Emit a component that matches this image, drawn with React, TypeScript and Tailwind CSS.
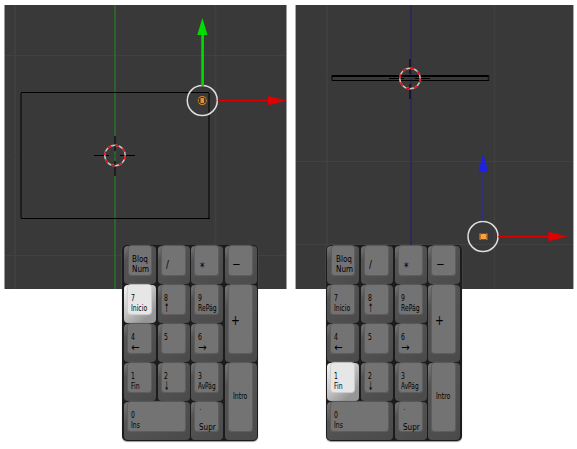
import React from "react";

type Line = { text: string; scale?: string; font?: string };
type KeyDef = {
  id: string;
  span?: string;
  pad: string;
  lines: Line[];
};

const narrow = "scale-x-[.65]";
const wide = "scale-x-[.77]";
const small = "text-[9.4px] leading-[10px]";
const sideArrow = "text-[11px] leading-[11px]";
const upArrow = "text-[12px] leading-[11px]";
const low = "pt-[8px] pl-[6.7px]";

const keys: KeyDef[] = [
  { id: "lock", pad: "pt-[8px] pl-[8.3px]", lines: [{ text: "Bloq", scale: wide }, { text: "Num", scale: wide }] },
  { id: "div", pad: "pt-[13px] pl-[8px]", lines: [{ text: "/", font: "text-[10px] leading-[12px]", scale: "scale-x-[.85]" }] },
  { id: "mul", pad: "pt-[15px] pl-[9px]", lines: [{ text: "*", font: "text-[12px] leading-[12px]", scale: "scale-x-[.75]" }] },
  { id: "sub", pad: "pt-[13.5px] pl-[7.5px]", lines: [{ text: "−", font: "text-[11px] leading-[12px]", scale: "scale-x-[.95]" }] },
  { id: "7", pad: low, lines: [{ text: "7" }, { text: "Inicio" }] },
  { id: "8", pad: low, lines: [{ text: "8" }, { text: "↑", font: upArrow, scale: "scale-x-[.5]" }] },
  { id: "9", pad: low, lines: [{ text: "9" }, { text: "RePág" }] },
  { id: "add", span: "row-span-2", pad: "pt-[28px] pl-[6.5px]", lines: [{ text: "+", font: "text-[14px] leading-[15px]", scale: "scale-x-[.75]" }] },
  { id: "4", pad: low, lines: [{ text: "4" }, { text: "←", font: sideArrow, scale: "scale-x-[.92]" }] },
  { id: "5", pad: low, lines: [{ text: "5" }] },
  { id: "6", pad: low, lines: [{ text: "6" }, { text: "→", font: sideArrow, scale: "scale-x-[.92]" }] },
  { id: "1", pad: low, lines: [{ text: "1" }, { text: "Fin" }] },
  { id: "2", pad: low, lines: [{ text: "2" }, { text: "↓", font: upArrow, scale: "scale-x-[.5]" }] },
  { id: "3", pad: low, lines: [{ text: "3" }, { text: "AvPág", scale: "scale-x-[.62]" }] },
  { id: "enter", span: "row-span-2", pad: "pt-[28px] pl-[8px]", lines: [{ text: "Intro", font: "text-[9.5px] leading-[10px]" }] },
  { id: "0", span: "col-span-2", pad: low, lines: [{ text: "0" }, { text: "Ins" }] },
  { id: "dot", pad: "pt-[2px] pl-[8px]", lines: [{ text: "˙", font: "text-[9px] leading-[18px]" }, { text: "Supr", scale: wide }] },
];

function Key({ def, lit }: { def: KeyDef; lit: boolean }) {
  const shell = lit
    ? "bg-[linear-gradient(135deg,#f4f4f4_0%,#cfcfcf_35%,#969696_80%)]"
    : "bg-[linear-gradient(135deg,#787878_0%,#545454_22%,#4a4a4a_100%)]";
  const face = lit ? "bg-[#e6e6e6] shadow-[0_0_1px_1px_#d0d0d0]" : "bg-[#737373] shadow-[0_0_1px_.5px_#606060]";
  return (
    <div className={`rounded-[4px] pt-[3px] pr-[5px] pb-[6px] ${def.id === "lock" ? "pl-[5px]" : "pl-[4px]"} ${def.span ?? ""} ${shell}`}>
      <div className={`h-full rounded-[3px] ${face}`}>
        <div className={`-mt-[3px] ${def.id === "lock" ? "-ml-[5px]" : "-ml-[4px]"} flex flex-col items-start ${def.pad}`}>
          {def.lines.map((l, i) => (
            <span key={i} className={`origin-left whitespace-nowrap ${l.font ?? small} ${l.scale ?? narrow}`}>
              {l.text}
            </span>
          ))}
        </div>
      </div>
    </div>
  );
}

function Keypad({ lit, place }: { lit: string; place: string }) {
  return (
    <div
      className={`absolute top-[245px] ${place} grid h-[196px] w-[136px] grid-cols-[32px_32px_32px_32px] grid-rows-[38px_38px_38px_38px_38px] gap-x-[1.67px] gap-y-[1.1px] rounded-[5px] bg-[#1c1c1c] pt-[.9px] pl-[1.7px] font-['DejaVu_Sans','Liberation_Sans',sans-serif] text-black shadow-[0_1px_1px_#999]`}
    >
      {keys.map((k) => (
        <Key key={k.id} def={k} lit={k.id === lit} />
      ))}
    </div>
  );
}

function Cursor({ x, y, vertical }: { x: number; y: number; vertical: string }) {
  return (
    <g fill="none">
      <path d={`M${x - 21} ${y}h15M${x + 5} ${y}h15`} stroke="#000" />
      <path d={`M${x} ${y - 19.5}v15M${x} ${y + 5.5}v15`} stroke={vertical} strokeWidth="2" />
      <circle cx={x} cy={y} r="10.2" stroke="#c4c4c4" strokeWidth="1.4" />
      <circle cx={x} cy={y} r="10.2" stroke="#f00000" strokeWidth="1.5" strokeDasharray="4 4" />
    </g>
  );
}

function TopView() {
  return (
    <svg className="block h-[284px] w-[283px] bg-[#393939]" viewBox="4 5 283 284">
      <path d="M15 5v284M215.5 5v284" stroke="#3f3f3f" strokeWidth="2" />
      <path d="M4 55.5h283M4 255.5h283" stroke="#414141" />
      <path d="M115 5v284" stroke="#2b632e" strokeWidth="2" />
      <path d="M4 155.5h283" stroke="#702328" />
      <path d="M21 93v125M209 93v125" stroke="#1c1c1c" strokeWidth="2" />
      <path d="M21 92.5h188M21 218.5h189" stroke="#000" />
      <Cursor x={115} y={155.5} vertical="#1e1e1e" />
      <circle cx="202.3" cy="100.5" r="15" fill="none" stroke="#dedede" strokeWidth="1.5" />
      <path d="M201.3 34h2.6v52h-2.6zM202.4 18l5.1 17h-10.2z" fill="#00dc00" />
      <path d="M217.5 100h51v1h-51zM268 96l18.5 4.5-18.5 4.8z" fill="#df0000" />
      <circle cx="202.3" cy="100.5" r="4" fill="#382b1b" stroke="#d58a32" strokeWidth="1.2" />
      <path d="M197.8 99h9M197.8 102h9" stroke="#2b2722" strokeWidth=".8" />
      <path d="M200.5 98h3.6v5h-3.6z" fill="#dc923d" />
      <path d="M4.5 5v284M286.5 5v284" stroke="#999" />
    </svg>
  );
}

function FrontView() {
  return (
    <svg className="block h-[284px] w-[279px] bg-[#393939]" viewBox="295 5 279 284">
      <path d="M327 5v284M494.5 5v284" stroke="#3f3f3f" strokeWidth="2" />
      <path d="M295 161.5h279M295 244.5h279" stroke="#414141" />
      <path d="M411 5v284" stroke="#2b2b55" strokeWidth="2" />
      <path d="M295 77.5h279" stroke="#64262a" />
      <path d="M332 75.5v5M488.5 75v6" stroke="#151515" strokeWidth="1.5" />
      <path d="M332 76h156.5" stroke="#000" strokeWidth="2" />
      <path d="M332 80.5h156.5" stroke="#000" />
      <Cursor x={410} y={78.5} vertical="#18182a" />
      <circle cx="483" cy="236.5" r="15" fill="none" stroke="#dedede" strokeWidth="1.5" />
      <path d="M482.5 170h1.4v51h-1.4z" fill="#2929b5" />
      <path d="M483.2 153.5l4.8 17.7h-9.6z" fill="#2020e0" />
      <path d="M498 236h51v1.2h-51zM548.3 231.8l19.5 4.8-19.5 4.6z" fill="#df0000" />
      <path d="M479.3 233.3h8.3v6.7h-8.3z" fill="#b8752b" />
      <path d="M481.5 233.5h4M480 236.5h7M481.5 239.5h4" stroke="#302318" />
      <circle cx="483.5" cy="236.6" r="3" fill="#ffa13a" />
      <path d="M295.5 5v284M573.5 5v284" stroke="#aaa" />
    </svg>
  );
}

export default function App() {
  return (
    <main className="relative h-[449px] w-[577px] overflow-hidden bg-white">
      <div className="flex gap-[8px] pt-[5px] pl-[4px]">
        <TopView />
        <FrontView />
      </div>
      <Keypad lit="7" place="left-[122.3px]" />
      <Keypad lit="1" place="left-[325.6px]" />
    </main>
  );
}
